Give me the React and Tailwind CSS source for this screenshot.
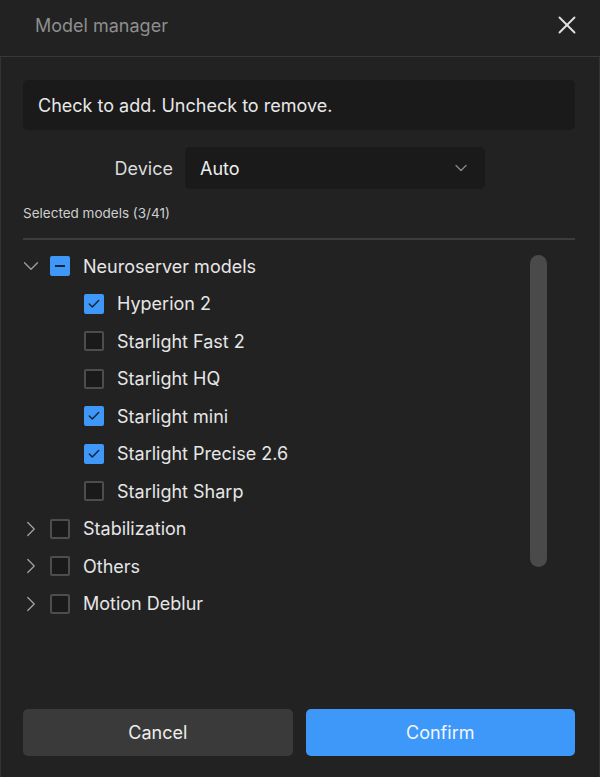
import { Check, ChevronDown, ChevronRight, X } from 'lucide-react';

const models = [
  { label: 'Hyperion 2', checked: true },
  { label: 'Starlight Fast 2', checked: false },
  { label: 'Starlight HQ', checked: false },
  { label: 'Starlight mini', checked: true },
  { label: 'Starlight Precise 2.6', checked: true },
  { label: 'Starlight Sharp', checked: false },
];

const groups = ['Stabilization', 'Others', 'Motion Deblur'];

function Box({ state }) {
  if (state === 'checked') {
    return (
      <span className="h-5 w-5 rounded-[2px] bg-[#3f97f8] flex items-center justify-center flex-shrink-0">
        <Check size={14} strokeWidth={2.5} className="text-[#10233d]" />
      </span>
    );
  }
  if (state === 'mixed') {
    return (
      <span className="h-5 w-5 rounded-[2px] bg-[#3f97f8] flex items-center justify-center flex-shrink-0">
        <span className="h-[2px] w-[10px] bg-[#10233d]" />
      </span>
    );
  }
  return <span className="block h-5 w-5 rounded-[2px] bg-[#1a1a1a] border-2 border-[#4d4d4d] flex-shrink-0" />;
}

export default function App() {
  return (
    <div
      className="w-[600px] h-[777px] bg-[#222222] flex flex-col text-[#e6e6e6]"
      style={{ fontFamily: 'Inter, "Noto Sans", sans-serif' }}
    >
      {/* Header */}
      <div className="h-[57px] flex items-center justify-between pl-[35px] pr-[18px] pb-[6px] border-b border-[#383838] flex-shrink-0">
        <span className="text-[18px] text-[#8e8e8e]">Model manager</span>
        <X size={30} strokeWidth={1.5} className="text-[#e0e0e0]" />
      </div>

      {/* Body */}
      <div className="flex-1 flex flex-col border-x border-[#333333] pl-[22px] pr-[24px]">
        <div className="mt-[23px] h-[50px] rounded-[5px] bg-[#1a1a1a] flex items-center px-[15px] text-[18px] text-[#e8e8e8]">
          Check to add. Uncheck to remove.
        </div>

        <div className="mt-[17px] flex items-center">
          <span className="w-[150px] text-right text-[18px] text-[#dcdcdc]">Device</span>
          <div className="ml-[12px] w-[300px] h-[42px] rounded-[5px] bg-[#1a1a1a] flex items-center justify-between pl-[15px] pr-[14px]">
            <span className="text-[18px] text-[#eeeeee]">Auto</span>
            <ChevronDown size={20} strokeWidth={1.5} className="text-[#8a8a8a]" />
          </div>
        </div>

        <div className="mt-[14px] text-[13.5px] text-[#cfcfcf]">Selected models (3/41)</div>
        <div className="mt-[15px] h-[2px] bg-[#3d3d3d]" />

        <div className="flex mt-[7px]">
          <div className="flex-1 flex flex-col">
            <div className="h-[37.5px] flex items-center">
              <ChevronDown size={26} strokeWidth={1.2} className="text-[#a0a0a0] -ml-[5px]" />
              <span className="ml-[6px] flex"><Box state="mixed" /></span>
              <span className="ml-[13px] text-[18px]">Neuroserver models</span>
            </div>
            {models.map((m) => (
              <div key={m.label} className="h-[37.5px] flex items-center pl-[61px]">
                <Box state={m.checked ? 'checked' : 'unchecked'} />
                <span className="ml-[13px] text-[18px]">{m.label}</span>
              </div>
            ))}
            {groups.map((g) => (
              <div key={g} className="h-[37.5px] flex items-center">
                <ChevronRight size={26} strokeWidth={1.2} className="text-[#a0a0a0] -ml-[5px]" />
                <span className="ml-[6px] flex"><Box state="unchecked" /></span>
                <span className="ml-[13px] text-[18px]">{g}</span>
              </div>
            ))}
          </div>
          <div className="w-[17px] mr-[28px] mt-[8px] h-[312px] rounded-full bg-[#4a4a4a]" />
        </div>

        <div className="mt-auto mb-[21px] flex gap-[13px]">
          <button className="flex-1 h-[47px] rounded-[5px] bg-[#3a3a3a] text-[18px] text-[#eeeeee]">Cancel</button>
          <button className="flex-1 h-[47px] rounded-[5px] bg-[#3e98fa] text-[18px] text-[#f2f7ff]">Confirm</button>
        </div>
      </div>
    </div>
  );
}
